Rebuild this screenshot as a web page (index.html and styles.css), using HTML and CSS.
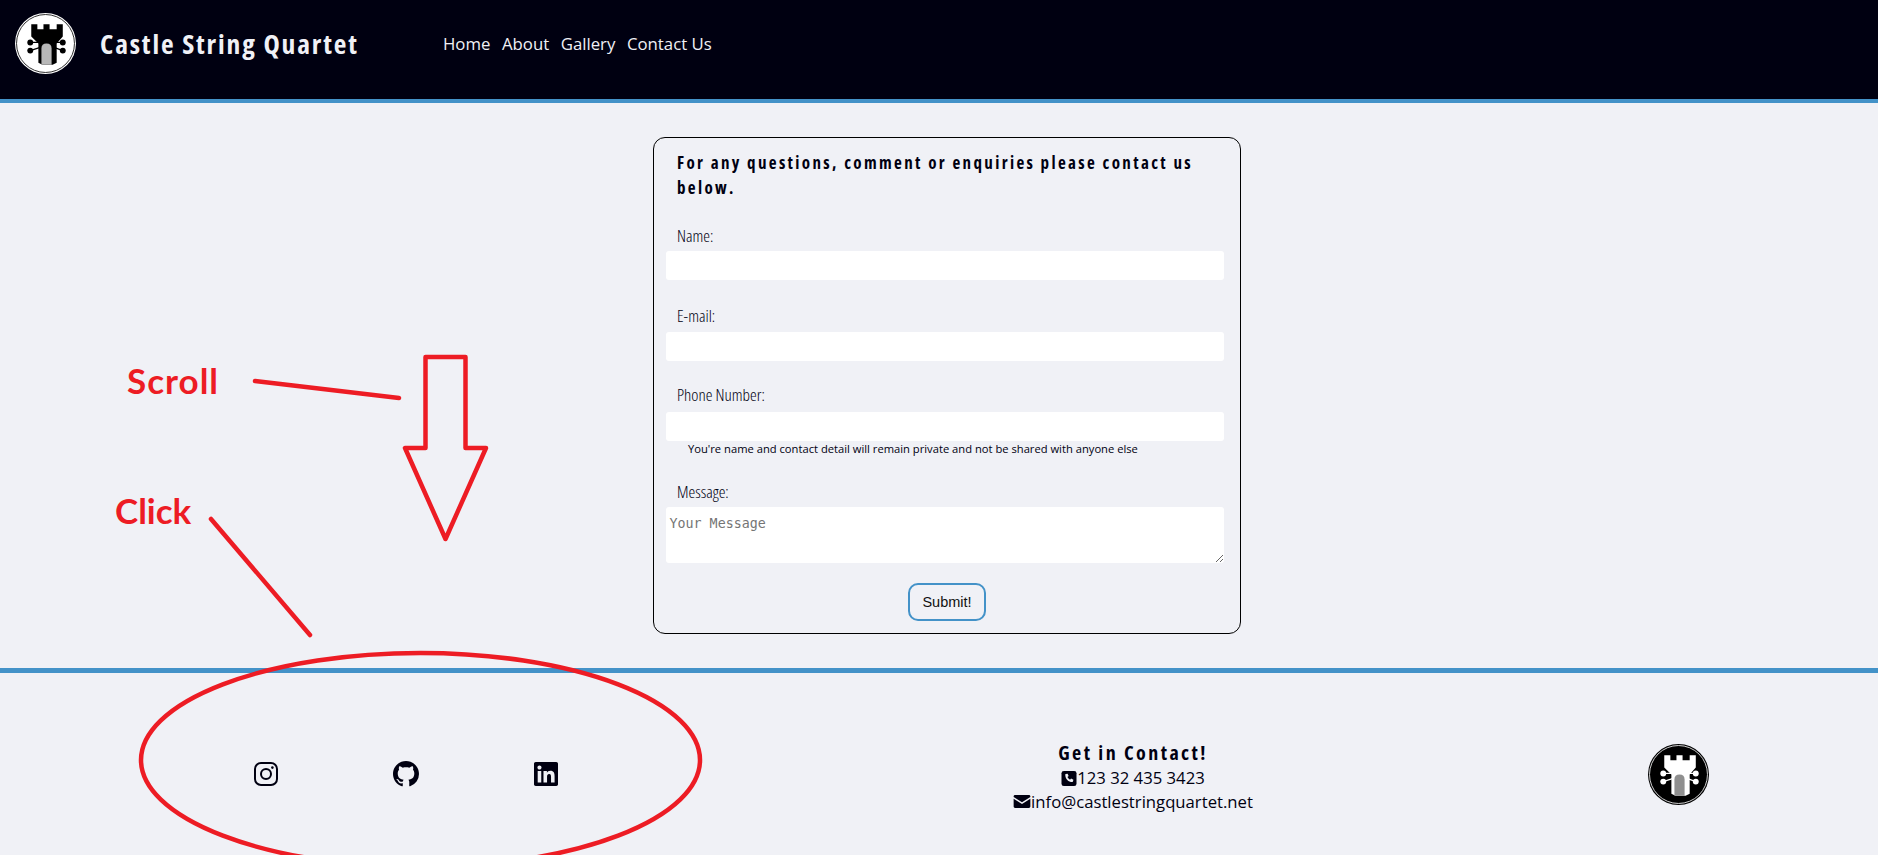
FILE: index.html
```html
<!DOCTYPE html>
<html lang="en">
<head>
<meta charset="utf-8">
<title>Castle String Quartet - Contact</title>
<link rel="stylesheet" href="styles.css">
</head>
<body>
<svg width="0" height="0" class="defs" aria-hidden="true">
  <symbol id="castle" viewBox="0 0 60 60">
    <path class="castle-wire" d="M15 29h9M15 37l9-3M47 29h-8M47 37l-8-3"/>
    <path class="castle-body" d="M16 11h6v5h6v-5h6v5h7v-5h6v12l-6 7v19l-4 2h-10l-4-2V30l-7-7z"/>
    <path class="castle-door" d="M26 51V35q0-5 5-5t5 5v16z"/>
    <circle class="castle-body" cx="15" cy="29" r="2.900"/>
    <circle class="castle-body" cx="15" cy="37" r="2.900"/>
    <circle class="castle-body" cx="47" cy="29" r="2.900"/>
    <circle class="castle-body" cx="47" cy="37" r="2.900"/>
  </symbol>
</svg>
<header class="site-header">
  <svg class="logo logo-light" viewBox="0 0 60 60" role="img" aria-label="Castle String Quartet logo">
    <circle class="ring-outer" cx="30" cy="30" r="30"/>
    <circle class="ring-inner" cx="30" cy="30" r="28.500"/>
    <use href="#castle"/>
  </svg>
  <div class="brand">Castle String Quartet</div>
  <nav class="nav">
    <a href="#">Home</a>
    <a href="#">About</a>
    <a href="#">Gallery</a>
    <a href="#">Contact Us</a>
  </nav>
</header>
<main class="content">
  <form class="contact-form">
    <h2 class="form-title">For any questions, comment or enquiries please contact us below.</h2>
    <label class="field-label label-name" for="name">Name:</label>
    <input class="field" id="name" type="text">
    <label class="field-label label-email" for="email">E-mail:</label>
    <input class="field" id="email" type="email">
    <label class="field-label label-phone" for="phone">Phone Number:</label>
    <input class="field" id="phone" type="tel">
    <p class="hint">You're name and contact detail will remain private and not be shared with anyone else</p>
    <label class="field-label label-message" for="message">Message:</label>
    <textarea class="field field-area" id="message" placeholder="Your Message"></textarea>
    <div class="actions"><button class="submit" type="button">Submit!</button></div>
  </form>
</main>
<footer class="site-footer">
  <div class="socials">
    <a href="#" aria-label="Instagram">
      <svg class="social-icon" viewBox="0 0 24 24"><rect x="1" y="1" width="22" height="22" rx="6" class="ig"/><circle cx="12" cy="12" r="5" class="ig"/><circle cx="18.400" cy="5.600" r="1.300" class="ig-dot"/></svg>
    </a>
    <a href="#" aria-label="GitHub">
      <svg class="social-icon github-icon" viewBox="0 0 16 16"><path class="solid" d="M8 0C3.580 0 0 3.580 0 8c0 3.540 2.290 6.530 5.470 7.590.400.070.550-.170.550-.380 0-.190-.010-.820-.010-1.490-2.010.370-2.530-.490-2.690-.940-.090-.230-.480-.940-.820-1.130-.280-.150-.680-.520-.010-.530.630-.010 1.080.580 1.230.820.720 1.210 1.870.870 2.330.660.070-.520.280-.870.510-1.070-1.780-.200-3.640-.890-3.640-3.950 0-.870.310-1.590.820-2.150-.080-.200-.360-1.020.080-2.120 0 0 .670-.210 2.200.820.640-.180 1.320-.270 2-.270.680 0 1.360.090 2 .270 1.530-1.040 2.200-.820 2.200-.820.440 1.100.160 1.920.080 2.120.510.560.820 1.270.820 2.150 0 3.070-1.870 3.750-3.650 3.950.290.250.540.730.540 1.480 0 1.070-.010 1.930-.010 2.200 0 .210.150.460.550.380A8.013 8.013 0 0016 8c0-4.420-3.580-8-8-8z"/></svg>
    </a>
    <a href="#" aria-label="LinkedIn">
      <svg class="social-icon" viewBox="0 32 448 448"><path class="solid" d="M416 32H31.900C14.300 32 0 46.500 0 64.300v383.400C0 465.500 14.300 480 31.900 480H416c17.600 0 32-14.500 32-32.300V64.300c0-17.800-14.400-32.300-32-32.300zM135.400 416H69V202.200h66.500V416zm-33.200-243c-21.300 0-38.500-17.300-38.500-38.500S80.900 96 102.200 96c21.200 0 38.500 17.300 38.500 38.500 0 21.300-17.200 38.500-38.500 38.500zm282.100 243h-66.400V312c0-24.800-.500-56.700-34.500-56.700-34.600 0-39.900 27-39.900 54.900V416h-66.400V202.200h63.700v29.200h.900c8.900-16.800 30.600-34.500 62.900-34.500 67.200 0 79.700 44.300 79.700 101.900V416z"/></svg>
    </a>
  </div>
  <div class="contact">
    <h3 class="contact-title">Get in Contact!</h3>
    <p class="contact-line">
      <svg class="contact-icon" viewBox="0 0 16 16"><rect width="16" height="16" rx="2.500" class="solid"/><path d="M4.500 3.300l2-.5 1.100 2.600-1.300 1.100c.6 1.300 1.500 2.200 2.800 2.900l1.100-1.300 2.500 1.100-.5 2.100c-.1.300-.3.500-.6.500C7.400 11.800 4.100 8.400 4 3.900c0-.3.200-.5.500-.6z" class="reverse"/></svg>123 32 435 3423
    </p>
    <p class="contact-line">
      <svg class="contact-icon mail-icon" viewBox="0 0 18 14"><path class="solid" d="M1.500 0h15C17.300 0 18 .7 18 1.500v.6L9 7.800 0 2.100v-.6C0 .7.700 0 1.500 0zM0 4l9 5.700L18 4v8.500c0 .8-.7 1.500-1.500 1.500h-15C.7 14 0 13.300 0 12.500z"/></svg>info@castlestringquartet.net
    </p>
  </div>
  <svg class="logo logo-dark" viewBox="0 0 60 60" role="img" aria-label="Castle String Quartet logo">
    <circle class="ring-outer" cx="30" cy="30" r="30"/>
    <circle class="ring-inner" cx="30" cy="30" r="28.500"/>
    <use href="#castle"/>
  </svg>
</footer>
<svg class="annotations" viewBox="0 0 1878 855" aria-hidden="true">
  <polygon class="mark" points="425.500,357 465.500,357 465.500,448 486,448 445.500,539 405,448 425.500,448"/>
  <line class="mark" x1="255" y1="381" x2="399" y2="398"/>
  <line class="mark" x1="211" y1="519" x2="310" y2="635"/>
  <ellipse class="mark" cx="420.500" cy="760" rx="279.500" ry="107"/>
</svg>
<span class="note note-scroll">Scroll</span>
<span class="note note-click">Click</span>
</body>
</html>
```
FILE: styles.css
```css
* { box-sizing: border-box; }
html, body { margin: 0; height: 100%; }
body {
  position: relative;
  height: 855px;
  overflow: hidden;
  background: #f0f1f6;
  color: #000011;
  font-family: "Open Sans", sans-serif;
}
.defs { position: absolute; }

.site-header {
  display: flex;
  align-items: center;
  height: 103px;
  padding: 0 0 12px 15px;
  background: #000011;
  border-bottom: 4px solid #4392c8;
}
.logo { display: block; width: 61px; height: 61px; flex: none; }
.logo-light { --ring: #000; --base: #fff; --fg: #000; --door: #b8b8b8; }
.logo-dark { --ring: #fff; --base: #000; --fg: #fff; --door: #8f8f8f; }
.ring-outer { fill: var(--base); }
.ring-inner { fill: var(--base); stroke: var(--ring); stroke-width: .8; }
.castle-body { fill: var(--fg); }
.castle-door { fill: var(--door); }
.castle-wire { fill: none; stroke: var(--fg); stroke-width: 1.2; }
.brand {
  margin-left: 24px;
  width: 343px;
  color: #f0f1f6;
  font-family: "Open Sans", sans-serif;
  font-stretch: 75%;
  font-weight: 700;
  font-size: 27.500px;
  letter-spacing: 1.850px;
  white-space: nowrap;
}
.nav { display: flex; gap: 11.500px; }
.nav a { color: #f0f1f6; text-decoration: none; font-size: 16.800px; }

.content { display: flex; justify-content: center; padding: 34px 0 34px 16px; }
.contact-form {
  width: 588px;
  height: 497px;
  padding: 12px 12px 0;
  border: 1px solid #000;
  border-radius: 12px;
}
.form-title {
  margin: 0 0 0 11px;
  max-width: 535px;
  font-family: "Open Sans", sans-serif;
  font-stretch: 75%;
  font-weight: 700;
  font-size: 17px;
  line-height: 25px;
  letter-spacing: 2.350px;
}
.field-label {
  display: block;
  margin-left: 11px;
  font-family: "Open Sans", sans-serif;
  font-stretch: 75%;
  font-weight: 350;
  font-size: 17px;
  line-height: 22px;
}
.label-name { margin-top: 25px; margin-bottom: 4px; }
.label-email { margin-top: 25.500px; margin-bottom: 5px; }
.label-phone { margin-top: 23.500px; margin-bottom: 6px; }
.label-message { margin-top: 25.500px; margin-bottom: 4px; }
.field {
  display: block;
  width: 558px;
  height: 28.500px;
  border: 0;
  border-radius: 3px;
  background: #fff;
}
.field-area {
  height: 56px;
  padding: 8.500px 3.500px 2px;
  resize: both;
  font-family: "DejaVu Sans Mono", monospace;
  font-size: 13.333px;
}
.hint {
  margin: 0 0 0 22px;
  font-size: 11.200px;
  line-height: 15px;
}
.actions { display: flex; justify-content: center; margin-top: 20px; }
.submit {
  width: 78px;
  height: 38px;
  padding: 0;
  background: #f0f1f6;
  border: 2px solid #4392c8;
  border-radius: 10px;
  color: #111;
  font-family: "Liberation Sans", Arial, sans-serif;
  font-size: 14.500px;
}

.site-footer {
  display: grid;
  grid-template-columns: 811px 644px 1fr;
  align-items: center;
  height: 187px;
  padding-top: 20px;
  border-top: 5px solid #4392c8;
}
.socials { display: flex; justify-content: center; align-items: center; gap: 115px; }
.socials a { display: block; line-height: 0; }
.social-icon { width: 24px; height: 24px; }
.github-icon { width: 26px; height: 26px; }
.solid { fill: #000011; }
.reverse { fill: #f0f1f6; }
.ig { fill: none; stroke: #000011; stroke-width: 2; }
.ig-dot { fill: #000011; }
.contact { padding-top: 4px; text-align: center; }
.contact-title {
  margin: 0;
  font-family: "Open Sans", sans-serif;
  font-stretch: 75%;
  font-weight: 700;
  font-size: 20px;
  line-height: 27px;
  letter-spacing: 2.400px;
}
.contact-line { margin: 0; font-size: 16.700px; line-height: 24px; }
.contact-icon { width: 16px; height: 15px; vertical-align: -2px; }
.mail-icon { width: 18px; height: 13px; vertical-align: 0; }
.site-footer .logo { margin-left: 193px; }

.annotations { position: absolute; left: 0; top: 0; width: 1878px; height: 855px; pointer-events: none; }
.mark { fill: none; stroke: #ed1c24; stroke-width: 4.500; stroke-linejoin: round; stroke-linecap: round; }
.note {
  position: absolute;
  color: #ed1c24;
  font-family: "Lato", sans-serif;
  font-weight: 700;
  font-size: 35px;
  line-height: 40px;
}
.note-scroll { left: 127px; top: 360px; letter-spacing: 1px; }
.note-click { left: 115px; top: 490px; }
```
